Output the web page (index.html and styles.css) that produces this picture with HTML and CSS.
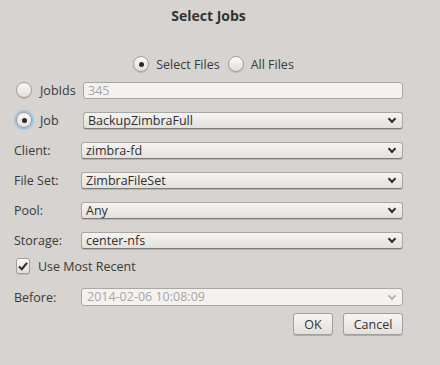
FILE: index.html
```html
<!DOCTYPE html>
<html lang="en">
<head>
<meta charset="UTF-8">
<title>Select Jobs</title>
<link rel="stylesheet" href="styles.css">
</head>
<body>
<div class="dialog">
  <h1 class="title">Select Jobs</h1>

  <div class="mode">
    <span class="radio on"></span><span class="mode-label">Select Files</span>
    <span class="radio"></span><span class="mode-label">All Files</span>
  </div>

  <div class="row">
    <div class="label radio-label"><span class="radio"></span>JobIds</div>
    <div class="field input shift">345</div>
  </div>
  <div class="row">
    <div class="label radio-label"><span class="radio on focus"></span>Job</div>
    <div class="field select shift">BackupZimbraFull<span class="chev"></span></div>
  </div>
  <div class="row">
    <div class="label">Client:</div>
    <div class="field select">zimbra-fd<span class="chev"></span></div>
  </div>
  <div class="row">
    <div class="label">File Set:</div>
    <div class="field select">ZimbraFileSet<span class="chev"></span></div>
  </div>
  <div class="row">
    <div class="label">Pool:</div>
    <div class="field select">Any<span class="chev"></span></div>
  </div>
  <div class="row">
    <div class="label">Storage:</div>
    <div class="field select">center-nfs<span class="chev"></span></div>
  </div>
  <div class="row check-row">
    <div class="label radio-label"><span class="check">
      <svg width="12" height="12" viewBox="0 0 12 12"><path d="M2 6.5 L4.8 9.2 L10 2.8" fill="none" stroke="#2e2e2e" stroke-width="2"/></svg>
    </span>Use Most Recent</div>
  </div>
  <div class="row before-row">
    <div class="label">Before:</div>
    <div class="field input disabled">2014-02-06 10:08:09<span class="chev light"></span></div>
  </div>

  <div class="buttons">
    <button class="btn ok">OK</button>
    <button class="btn cancel">Cancel</button>
  </div>
</div>
</body>
</html>
```

FILE: styles.css
```css
body, html {
  margin: 0;
  height: 100%;
  background: #d6d3d0;
  font-family: 'Open Sans', 'Noto Sans', sans-serif;
  font-size: 12.5px;
  color: #3a3a3a;
}

.dialog {
  padding: 0 37px 0 14px;
}

.title {
  margin: 0;
  padding-top: 7px;
  height: 20px;
  line-height: 18px;
  font-size: 14px;
  font-weight: bold;
  text-align: center;
  color: #333;
}

.mode {
  display: flex;
  justify-content: center;
  align-items: center;
  height: 22px;
  margin-top: 26px;
  padding-left: 18px;
}

.mode-label {
  margin: 0 8px 0 7px;
}

.radio {
  display: inline-block;
  box-sizing: border-box;
  width: 16px;
  height: 16px;
  border-radius: 50%;
  border: 1px solid #a29e9a;
  background: linear-gradient(#fbfaf9, #e2dfdc);
  box-shadow: 0 1px 0 rgba(0, 0, 0, 0.12);
  position: relative;
  flex: none;
}

.radio.on::after {
  content: '';
  position: absolute;
  left: 4.5px;
  top: 4.5px;
  width: 5px;
  height: 5px;
  border-radius: 50%;
  background: #2a2a2a;
}

.radio.focus {
  box-shadow: 0 0 0 2px #9cc4e4;
}

.row {
  display: flex;
  align-items: center;
  height: 30px;
}

.check-row {
  height: 22px;
}

.before-row {
  height: 18px;
  margin-top: 11px;
}

.label {
  width: 67px;
  flex: none;
  display: flex;
  align-items: center;
}

.radio-label {
  box-sizing: border-box;
  padding-left: 2px;
  white-space: nowrap;
}

.radio-label .radio,
.radio-label .check {
  margin-right: 8px;
}

.check {
  display: inline-flex;
  align-items: center;
  justify-content: center;
  box-sizing: border-box;
  width: 16px;
  height: 16px;
  border-radius: 3px;
  border: 1px solid #a29e9a;
  background: linear-gradient(#fbfaf9, #e2dfdc);
  box-shadow: 0 1px 0 rgba(0, 0, 0, 0.12);
}

.field {
  flex: 1;
  box-sizing: border-box;
  height: 17px;
  line-height: 15px;
  padding: 0 4px;
  border-radius: 3px;
  position: relative;
  white-space: nowrap;
}

.field.shift {
  margin-left: 2px;
}

.input {
  background: #f3f2f1;
  border: 1px solid #aaa6a2;
  color: #a9a6a3;
}

.input.disabled {
  height: 18px;
  line-height: 16px;
  padding-left: 5px;
}

.select {
  background: linear-gradient(#f5f4f2, #e3e0dd);
  border: 1px solid #aaa6a2;
  border-bottom-color: #7d7a77;
  box-shadow: 0 1px 0 rgba(0, 0, 0, 0.15);
  color: #2f2f2f;
}

.chev {
  position: absolute;
  right: 7px;
  top: 3px;
  width: 4px;
  height: 4px;
  border-right: 2px solid #2e2e2e;
  border-bottom: 2px solid #2e2e2e;
  transform: rotate(45deg);
}

.chev.light {
  border-color: #b9b6b3;
  top: 4px;
}

.buttons {
  display: flex;
  justify-content: flex-end;
  gap: 10px;
  margin-top: 7px;
}

.btn {
  font-family: inherit;
  font-size: 12.5px;
  color: #333;
  height: 22px;
  padding: 0;
  border: 1px solid #a29e9a;
  border-radius: 3px;
  background: linear-gradient(#f7f6f5, #e2dfdc);
  box-shadow: 0 1px 0 rgba(0, 0, 0, 0.18);
}

.ok {
  width: 40px;
}

.cancel {
  width: 60px;
}
```
